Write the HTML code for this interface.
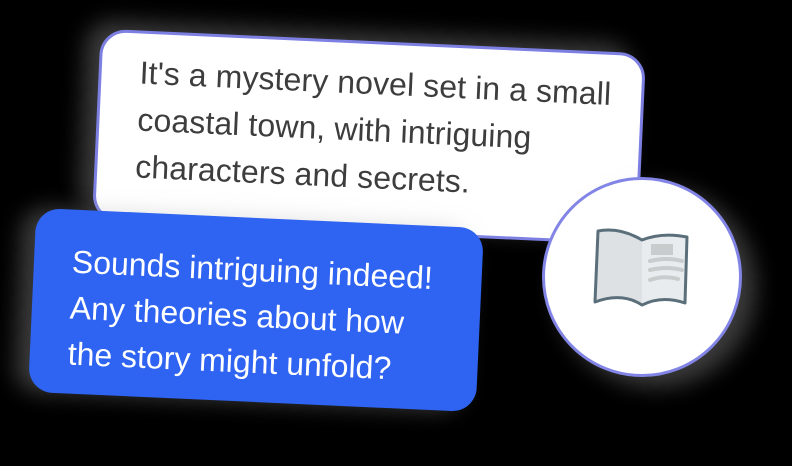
<!DOCTYPE html>
<html><head><style>
body{margin:0;width:792px;height:466px;background:#000;overflow:hidden;position:relative;font-family:"Liberation Sans",sans-serif}
.card{position:absolute;box-sizing:border-box;transform:rotate(2.6deg)}
#w{left:96px;top:41px;width:546px;height:192px;background:#fff;border:3px solid #7d80e2;border-radius:26px;box-shadow:-14px -8px 22px rgba(170,170,170,.35)}
#w p{margin:0;position:absolute;left:38px;top:16px;font-size:32px;line-height:47px;color:#3d3d3d;letter-spacing:0.1px;white-space:nowrap}
#b{left:32px;top:218px;width:448px;height:184px;background:#2f63f1;border-radius:24px;box-shadow:-14px 0 22px rgba(170,170,170,.35)}
#b p{margin:0;position:absolute;left:38px;top:29px;font-size:32px;line-height:46px;color:#fff;letter-spacing:0px;white-space:nowrap}
#c{position:absolute;left:542px;top:177px;width:200px;height:200px;box-sizing:border-box;border-radius:50%;background:#fff;border:3px solid #8385e6;box-shadow:14px 10px 22px rgba(170,170,170,.35)}
</style></head><body>
<div class="card" id="w"><p>It's a mystery novel set in a small<br>coastal town, with intriguing<br>characters and secrets.</p></div>
<div class="card" id="b"><p>Sounds intriguing indeed!<br>Any theories about how<br>the story might unfold?</p></div>
<div id="c"><svg width="200" height="200" viewBox="0 0 200 200" style="position:absolute;left:-3px;top:-3px">
<path d="M56 54 Q78 50 100 63 L100 126 Q80 115 53 124 Z" fill="#dde1e3"/>
<path d="M100 63 Q120 55 145 60 L143 126 Q120 118 100 126 Z" fill="#e9ecee"/>
<path d="M56 54 Q78 50 100 63 Q120 55 145 60 L143 126 Q120 118 100 128 Q80 115 53 125 Z" fill="none" stroke="#5b6f7b" stroke-width="3" stroke-linejoin="round"/>
<rect x="109" y="67" width="22" height="11" fill="#c9cccd"/>
<path d="M108 84 Q125 80 140 84 M108 93 Q125 89 140 93 M108 103 Q122 98 136 102" stroke="#c9cccd" stroke-width="4" fill="none" stroke-linecap="round"/>
</svg></div>
</body></html>
